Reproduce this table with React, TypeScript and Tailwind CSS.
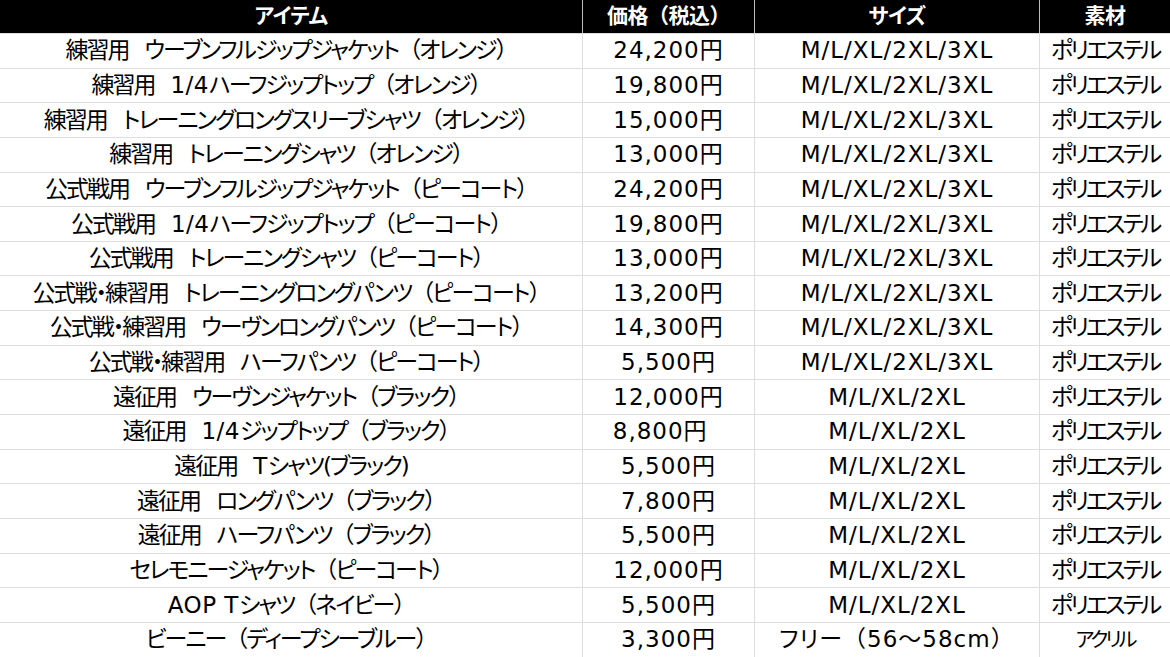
import React from 'react';

const rows: [string, string, string, string][] = [
  ['練習用   ウーブンフルジップジャケット（オレンジ）', '24,200円', 'M/L/XL/2XL/3XL', 'ポリエステル'],
  ['練習用   1/4ハーフジップトップ（オレンジ）', '19,800円', 'M/L/XL/2XL/3XL', 'ポリエステル'],
  ['練習用   トレーニングロングスリーブシャツ（オレンジ）', '15,000円', 'M/L/XL/2XL/3XL', 'ポリエステル'],
  ['練習用   トレーニングシャツ（オレンジ）', '13,000円', 'M/L/XL/2XL/3XL', 'ポリエステル'],
  ['公式戦用   ウーブンフルジップジャケット（ピーコート）', '24,200円', 'M/L/XL/2XL/3XL', 'ポリエステル'],
  ['公式戦用   1/4ハーフジップトップ（ピーコート）', '19,800円', 'M/L/XL/2XL/3XL', 'ポリエステル'],
  ['公式戦用   トレーニングシャツ（ピーコート）', '13,000円', 'M/L/XL/2XL/3XL', 'ポリエステル'],
  ['公式戦・練習用   トレーニングロングパンツ（ピーコート）', '13,200円', 'M/L/XL/2XL/3XL', 'ポリエステル'],
  ['公式戦・練習用   ウーヴンロングパンツ（ピーコート）', '14,300円', 'M/L/XL/2XL/3XL', 'ポリエステル'],
  ['公式戦・練習用   ハーフパンツ（ピーコート）', '5,500円', 'M/L/XL/2XL/3XL', 'ポリエステル'],
  ['遠征用   ウーヴンジャケット（ブラック）', '12,000円', 'M/L/XL/2XL', 'ポリエステル'],
  ['遠征用   1/4ジップトップ（ブラック）', '8,800円  ', 'M/L/XL/2XL', 'ポリエステル'],
  ['遠征用   Tシャツ(ブラック)', '5,500円', 'M/L/XL/2XL', 'ポリエステル'],
  ['遠征用   ロングパンツ（ブラック）', '7,800円', 'M/L/XL/2XL', 'ポリエステル'],
  ['遠征用   ハーフパンツ（ブラック）', '5,500円', 'M/L/XL/2XL', 'ポリエステル'],
  ['セレモニージャケット（ピーコート）', '12,000円', 'M/L/XL/2XL', 'ポリエステル'],
  ['AOP Tシャツ（ネイビー）', '5,500円', 'M/L/XL/2XL', 'ポリエステル'],
  ['ビーニー（ディープシーブルー）', '3,300円', 'フリー（56～58cm）', 'アクリル'],
];

const headers = ['アイテム', '価格（税込）', 'サイズ', '素材'];

// full-width parens keep their full width (palt would squeeze them),
// latin runs keep normal tracking inside the tightened japanese cells
function Text({ value, latin = false }: { value: string; latin?: boolean }) {
  return (
    <>
      {value.split(/([（）]|[A-Za-z0-9/]+(?: [A-Za-z0-9/]+)*)/).map((part, i) => {
        if (!part) return null;
        if (part === '（' || part === '）')
          return (
            <span key={i} className="[font-feature-settings:normal]">
              {part}
            </span>
          );
        if (latin && /[A-Za-z0-9]/.test(part))
          return (
            <span key={i} className="tracking-[0.5px]">
              {part}
            </span>
          );
        return <React.Fragment key={i}>{part}</React.Fragment>;
      })}
    </>
  );
}

const cellTracking = ['tracking-[-2px]', 'tracking-[1px]', 'tracking-[1px]', 'tracking-[-3px]'];

export default function App() {
  return (
    <div className="w-[1170px] h-[657px] overflow-hidden bg-white text-black font-['DejaVu_Sans','Noto_Sans_CJK_JP',sans-serif] [font-feature-settings:'palt']">
      {/* Header */}
      <div className="grid grid-cols-[583px_172px_285px_1fr] h-[33px] bg-black text-white font-bold text-[21px] tracking-[-0.5px]">
        {headers.map((h, i) => (
          <div
            key={h}
            className={`flex items-center justify-center ${i < 3 ? 'border-r border-[#bdbdbd]' : ''}`}
          >
            <Text value={h} />
          </div>
        ))}
      </div>

      {/* Body */}
      {rows.map((r, ri) => (
        <div
          key={ri}
          className="grid grid-cols-[583px_172px_285px_1fr] h-[34.65px] border-t border-[#dedede] text-[23px] leading-none"
        >
          {r.map((c, ci) => (
            <div
              key={ci}
              className={`flex items-center justify-center whitespace-pre ${cellTracking[ci]} ${ci < 3 ? 'border-r border-[#dedede]' : ''} ${c === 'アクリル' ? 'text-[20px] tracking-[-1px]' : ''} ${c.startsWith('フリー') ? 'tracking-[0px]' : ''}`}
            >
              <Text value={c} latin={ci === 0} />
            </div>
          ))}
        </div>
      ))}
    </div>
  );
}
